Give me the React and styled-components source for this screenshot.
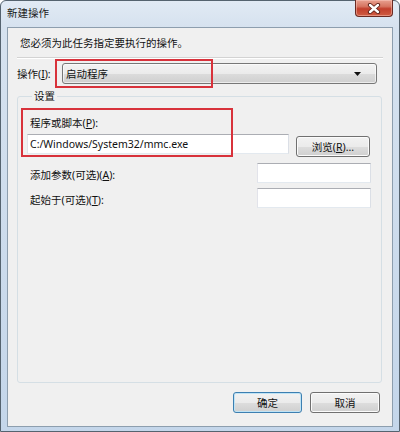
import React from "react";
import styled, { createGlobalStyle } from "styled-components";

const GlobalStyle = createGlobalStyle`
  html, body { margin: 0; padding: 0; background: #ffffff; }
  body {
    font-family: "Noto Sans", "Noto Sans CJK SC", sans-serif;
    font-size: 10.5px;
    color: #111;
  }
  * { box-sizing: border-box; }
`;

const Window = styled.div`
  width: 400px;
  height: 432px;
  display: flex;
  flex-direction: column;
  border: 1px solid #55636f;
  border-radius: 6px 6px 0 0;
  background: linear-gradient(to bottom, #e1eaf4 0, #d6e2ef 26px, #c4d6ea 100%);
  padding: 0 6px 4px 6px;
`;

const TitleBar = styled.div`
  height: 26px;
  flex: none;
  display: flex;
  align-items: flex-start;
  justify-content: space-between;
`;

const Title = styled.span`
  line-height: 25px;
  color: #1a1a1a;
`;

const CloseButton = styled.div`
  width: 38px;
  height: 17px;
  margin-top: -1px;
  border: 1px solid #6a2a22;
  border-top: none;
  border-radius: 0 0 4px 4px;
  background: linear-gradient(to bottom, #e8a090 0%, #d67561 40%, #c23f2c 55%, #cf5c42 100%);
  box-shadow: inset 0 0 0 1px rgba(255, 210, 200, 0.45);
  display: flex;
  align-items: center;
  justify-content: center;
`;

const Client = styled.div`
  flex: 1;
  position: relative;
  display: flex;
  flex-direction: column;
  background: #f0f0f0;
  border: 1px solid #8d9eae;
  padding: 7px 9px 13px 9px;
`;

const Instruction = styled.div`
  line-height: 16px;
  margin-left: 3px;
`;

const Separator = styled.div`
  margin-top: 6px;
  border-top: 1px solid #d3d3d3;
  border-bottom: 1px solid #ffffff;
`;

const ActionRow = styled.div`
  margin-top: 4px;
  display: flex;
  align-items: center;
  height: 21px;
`;

const ActionLabel = styled.span`
  width: 45px;
  flex: none;
  line-height: 16px;
`;

const Combo = styled.div`
  flex: 1;
  height: 21px;
  margin-right: 6px;
  border: 1px solid #777777;
  border-radius: 3px;
  background: linear-gradient(to bottom, #f3f3f3 0%, #ebebeb 50%, #dcdcdc 51%, #cfcfcf 100%);
  box-shadow: inset 0 0 0 1px rgba(255, 255, 255, 0.6);
  display: flex;
  align-items: center;
  justify-content: space-between;
  padding: 0 15px 0 3px;
`;

const GroupBox = styled.fieldset`
  flex: 1;
  min-width: 0;
  margin: 4px 1px 0 0;
  border: 1px solid #d5dfe5;
  border-radius: 3px;
  padding: 11px 10px 0 9px;
`;

const Legend = styled.legend`
  margin-left: 5px;
  padding: 0 2px;
  line-height: 16px;
`;

const FieldLabel = styled.div`
  padding-left: 3px;
  line-height: 16px;
`;

const PathRow = styled.div`
  margin-top: 3px;
  display: flex;
  align-items: flex-start;
  height: 23px;
`;

const TextBox = styled.div`
  width: ${(p) => p.$width}px;
  height: 20px;
  flex: none;
  background: #ffffff;
  border: 1px solid;
  border-color: #abadb3 #dbdfe6 #e3e9ef #e2e3ea;
  padding: 0 2px;
  line-height: 18px;
  white-space: nowrap;
  overflow: hidden;
`;

const OptionRow = styled.div`
  margin-top: ${(p) => p.$gap}px;
  display: flex;
  align-items: center;
  justify-content: space-between;
`;

const OptionLabel = styled.span`
  padding-left: 3px;
  line-height: 16px;
  padding-top: 3px;
`;

const Button = styled.div`
  width: ${(p) => p.$width}px;
  height: 21px;
  flex: none;
  margin-top: ${(p) => p.$offset || 0}px;
  border: 1px solid ${(p) => (p.$default ? "#3c7fb1" : "#707070")};
  border-radius: 3px;
  background: linear-gradient(to bottom, #f2f2f2 0%, #ebebeb 50%, #dddddd 51%, #cfcfcf 100%);
  box-shadow: inset 0 0 0 1px ${(p) => (p.$default ? "#bfe3f5" : "#fbfbfb")};
  display: flex;
  align-items: center;
  justify-content: center;
  line-height: 16px;
`;

const BrowseButton = styled(Button)`
  margin-left: 7px;
`;

const Footer = styled.div`
  margin-top: 9px;
  padding-right: 3px;
  display: flex;
  justify-content: flex-end;
  gap: 8px;
`;

const Highlight = styled.div`
  position: absolute;
  left: ${(p) => p.$x}px;
  top: ${(p) => p.$y}px;
  width: ${(p) => p.$w}px;
  height: ${(p) => p.$h}px;
  border: 2px solid #d8323b;
  pointer-events: none;
`;

const CloseGlyph = () => (
  <svg width="14" height="11" viewBox="0 0 14 11">
    <path d="M3 2 L11 9 M11 2 L3 9" stroke="#5a1f17" strokeWidth="4.2" strokeLinecap="round" />
    <path d="M3 2 L11 9 M11 2 L3 9" stroke="#ffffff" strokeWidth="2.4" strokeLinecap="round" />
  </svg>
);

const ComboArrow = () => (
  <svg width="7" height="4" viewBox="0 0 7 4">
    <path d="M0 0 H7 L3.5 4 Z" fill="#111" />
  </svg>
);

export default function App() {
  return (
    <>
      <GlobalStyle />
      <Window>
        <TitleBar>
          <Title>新建操作</Title>
          <CloseButton>
            <CloseGlyph />
          </CloseButton>
        </TitleBar>
        <Client>
          <Instruction>您必须为此任务指定要执行的操作。</Instruction>
          <Separator />
          <ActionRow>
            <ActionLabel>
              操作(<u>I</u>):
            </ActionLabel>
            <Combo>
              <span>启动程序</span>
              <ComboArrow />
            </Combo>
          </ActionRow>
          <GroupBox>
            <Legend>设置</Legend>
            <FieldLabel>
              程序或脚本(<u>P</u>):
            </FieldLabel>
            <PathRow>
              <TextBox $width={262}>C:/Windows/System32/mmc.exe</TextBox>
              <BrowseButton $width={74} $offset={2}>
                浏览(<u>R</u>)...
              </BrowseButton>
            </PathRow>
            <OptionRow $gap={6}>
              <OptionLabel>
                添加参数(可选)(<u>A</u>):
              </OptionLabel>
              <TextBox $width={114} />
            </OptionRow>
            <OptionRow $gap={5}>
              <OptionLabel>
                起始于(可选)(<u>T</u>):
              </OptionLabel>
              <TextBox $width={114} />
            </OptionRow>
          </GroupBox>
          <Footer>
            <Button $width={69} $default>
              确定
            </Button>
            <Button $width={70}>取消</Button>
          </Footer>
          <Highlight $x={47} $y={31} $w={158} $h={29} />
          <Highlight $x={13} $y={80} $w={212} $h={49} />
        </Client>
      </Window>
    </>
  );
}
